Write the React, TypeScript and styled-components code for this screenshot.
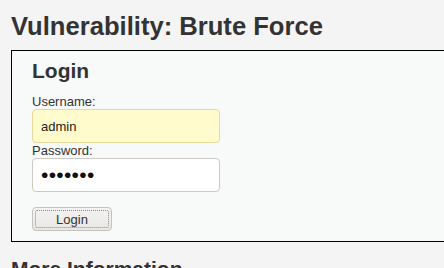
import React, { useState } from 'react'
import styled, { createGlobalStyle } from 'styled-components'

const GlobalStyle = createGlobalStyle`
  html, body {
    margin: 0;
    padding: 0;
    background: #f4f4f4;
    overflow: hidden;
  }
  body {
    font-family: "Liberation Sans", Arial, Helvetica, sans-serif;
    color: #333;
  }
`

const Page = styled.div`
  width: 640px;
  padding: 12px 0 0 11px;
`

const Title = styled.h1`
  margin: 0 0 9px;
  font-size: 25.6px;
  line-height: 29px;
  font-weight: bold;
  color: #333;
`

const Vulnerable = styled.div`
  border: 1px solid #000;
  background: #f8f9f9;
  padding: 8px 20px 10px;
`

const SubTitle = styled.h2<{ $top?: number }>`
  margin: ${(p) => p.$top ?? 0}px 0 0;
  font-size: 21px;
  line-height: 23px;
  font-weight: bold;
  color: #333;
`

const Form = styled.form`
  display: flex;
  flex-direction: column;
  align-items: flex-start;
  margin-top: 12px;
`

const Label = styled.label`
  font-size: 13px;
  line-height: 15px;
  color: #333;
`

const Input = styled.input<{ $filled?: boolean }>`
  box-sizing: border-box;
  width: 188px;
  height: 34px;
  padding: 0 8px;
  border-radius: 4px;
  border: 1px solid ${(p) => (p.$filled ? '#e8d89c' : '#cdcac6')};
  background: ${(p) => (p.$filled ? '#fffbcc' : '#fff')};
  font-family: "Liberation Sans", Arial, sans-serif;
  font-size: 13px;
  color: #222;
  outline: none;
  &[type='password'] {
    font-size: 21px;
    letter-spacing: 0.3px;
    color: #111;
  }
`

const Button = styled.button`
  box-sizing: border-box;
  margin-top: 15px;
  width: 80px;
  height: 24px;
  padding: 2px;
  border: 1px solid #c6c3bf;
  border-radius: 4px;
  background: linear-gradient(#f4f3f2, #e8e7e5);
  font-family: "Liberation Sans", Arial, sans-serif;
  font-size: 13px;
  color: #333;
  cursor: pointer;
`

const ButtonInner = styled.span`
  display: flex;
  align-items: center;
  justify-content: center;
  height: 100%;
  border: 1px dotted #8a8a8a;
  border-radius: 2px;
  box-sizing: border-box;
`

export default function App() {
  const [username, setUsername] = useState<string>('admin')
  const [password, setPassword] = useState<string>('letmein')

  return (
    <>
      <GlobalStyle />
      <Page>
        <Title>Vulnerability: Brute Force</Title>
        <Vulnerable>
          <SubTitle>Login</SubTitle>
          <Form onSubmit={(e) => e.preventDefault()}>
            <Label htmlFor="username">Username:</Label>
            <Input
              id="username"
              $filled
              type="text"
              value={username}
              onChange={(e) => setUsername(e.target.value)}
            />
            <Label htmlFor="password">Password:</Label>
            <Input
              id="password"
              type="password"
              value={password}
              onChange={(e) => setPassword(e.target.value)}
            />
            <Button type="submit">
              <ButtonInner>Login</ButtonInner>
            </Button>
          </Form>
        </Vulnerable>
        <SubTitle $top={15}>More Information</SubTitle>
      </Page>
    </>
  )
}
